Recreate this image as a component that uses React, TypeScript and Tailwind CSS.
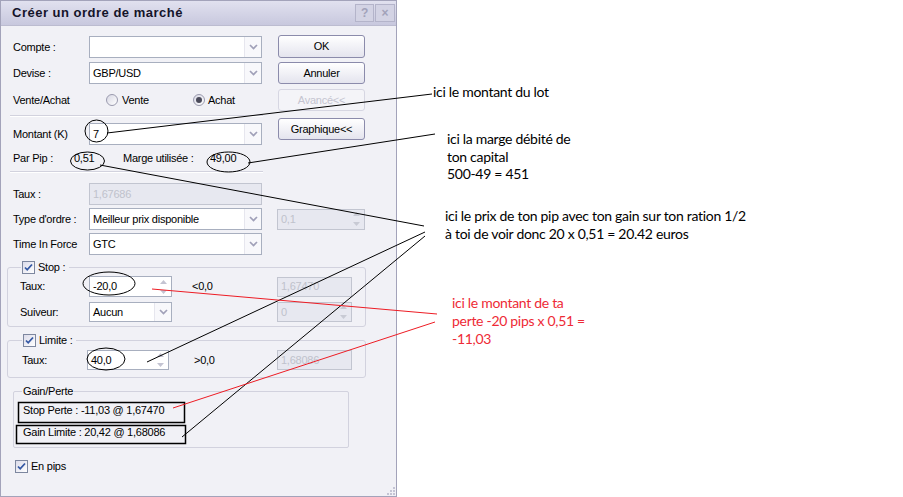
import React from "react";

const ui = "font-['Liberation_Sans',Arial,sans-serif] text-[11px] tracking-[-0.25px] text-black";
const note = "font-['Lato',sans-serif] text-[14px] tracking-[-0.3px]";

function Chevron() {
  return (
    <svg width="9" height="6" viewBox="0 0 9 6">
      <path d="M1 1l3.5 3.5L8 1" fill="none" stroke="#a0a0b8" strokeWidth="1.7" />
    </svg>
  );
}

function Arrows({ color }: { color: string }) {
  return (
    <span className="w-[15px] flex flex-col items-center justify-center gap-[6px]">
      <svg width="7" height="4" viewBox="0 0 7 4">
        <path d="M0 4L3.5 0L7 4z" fill={color} />
      </svg>
      <svg width="7" height="4" viewBox="0 0 7 4">
        <path d="M0 0L3.5 4L7 0z" fill={color} />
      </svg>
    </span>
  );
}

function Combo({ value, className }: { value: string; className: string }) {
  return (
    <div className={`${className} flex border border-[#a8afbf] bg-white`}>
      <span className="flex-1 pl-[3px] flex items-center">{value}</span>
      <span className="w-[17px] flex items-center justify-center border-l border-[#e6e6ee] bg-[#f8f8fb]">
        <Chevron />
      </span>
    </div>
  );
}

function Spin({ value, className, disabled }: { value: string; className: string; disabled?: boolean }) {
  return (
    <div
      className={`${className} flex border ${
        disabled ? "border-[#c2c5d0] bg-[#e7e8f0] text-[#bfc2cc]" : "border-[#a8afbf] bg-white"
      }`}
    >
      <span className="flex-1 pl-[3px] flex items-center">{value}</span>
      <Arrows color={disabled ? "#c8cad4" : "#c4c4d2"} />
    </div>
  );
}

function Field({ value, className }: { value: string; className: string }) {
  return (
    <div className={`${className} flex items-center pl-[3px] border border-[#c2c5d0] bg-[#e7e8f0] text-[#bfc2cc]`}>
      {value}
    </div>
  );
}

function Btn({ children, className, off }: { children: React.ReactNode; className: string; off?: boolean }) {
  return (
    <div
      className={`${className} flex items-center justify-center rounded-[3px] border ${
        off
          ? "border-[#d6d6e2] bg-[#f4f4f8] text-[#c4c4d0]"
          : "border-[#8b8bab] bg-gradient-to-b from-white to-[#e4e4ee]"
      }`}
    >
      {children}
    </div>
  );
}

function Check() {
  return (
    <span className="w-[13px] h-[13px] border border-[#7d879f] bg-gradient-to-br from-[#dcdcea] to-white flex items-center justify-center">
      <svg width="9" height="9" viewBox="0 0 9 9">
        <path d="M1 4.5l2.2 2.3L8 1.5" fill="none" stroke="#3458a4" strokeWidth="1.8" />
      </svg>
    </span>
  );
}

function Radio({ on }: { on?: boolean }) {
  return (
    <span className="w-[12px] h-[12px] rounded-full border border-[#9a9aae] bg-gradient-to-br from-[#d8d8e4] to-white flex items-center justify-center">
      {on && <span className="w-[6px] h-[6px] rounded-full bg-[#4a4a5a]" />}
    </span>
  );
}

function Dialog() {
  return (
    <div className={`${ui} w-[397px] h-[497px] shrink-0 flex flex-col border border-[#a3a3ba] bg-[#f1f1f6]`}>
      {/* title bar */}
      <div className="h-[25px] shrink-0 flex items-center pl-[11px] pr-[1px] border-b border-[#bcbcd0] bg-gradient-to-b from-[#e1e1ef] to-[#c8c8de]">
        <span className="font-bold text-[13px] tracking-[0.5px] text-[#14142a]">Créer un ordre de marché</span>
        <span className="ml-auto flex gap-[1px]">
          <span className="w-[19px] h-[18px] flex items-center justify-center border border-[#b4b4ca] bg-[#d3d3e4] text-[#a2a2ba] font-bold text-[12px]">?</span>
          <span className="w-[20px] h-[18px] flex items-center justify-center border border-[#b4b4ca] bg-[#d3d3e4] text-[#a2a2ba] font-bold text-[12px]">×</span>
        </span>
      </div>

      <div className="flex flex-col pt-[9px]">
        {/* upper block: fields + buttons */}
        <div className="flex">
          <div className="flex flex-col pl-[12px] mt-[1px] w-[261px]">
            <div className="h-[22px] flex items-center">
              <span className="w-[76px]">Compte :</span>
              <Combo value="" className="w-[173px] h-[22px]" />
            </div>
            <div className="h-[22px] flex items-center mt-[4px]">
              <span className="w-[76px]">Devise :</span>
              <Combo value="GBP/USD" className="w-[173px] h-[22px]" />
            </div>
            <div className="h-[22px] flex items-center mt-[5px]">
              <span className="w-[93px]">Vente/Achat</span>
              <span className="w-[87px] flex items-center gap-[4px]">
                <Radio />
                Vente
              </span>
              <span className="flex items-center gap-[3px]">
                <Radio on />
                Achat
              </span>
            </div>
            <div className="mt-[4px] -ml-[3px] w-[253px] h-[2px] border-t border-[#d2d2de] border-b border-b-white" />
            <div className="h-[22px] flex items-center mt-[6px]">
              <span className="w-[76px]">Montant (K)</span>
              <Combo value="7" className="w-[173px] h-[22px]" />
            </div>
          </div>
          <div className="flex flex-col ml-[16px] w-[87px]">
            <Btn className="h-[23px] border-[#7b7bb4]">OK</Btn>
            <Btn className="h-[22px] mt-[4px]">Annuler</Btn>
            <Btn className="h-[22px] mt-[5px]" off>
              Avancé&lt;&lt;
            </Btn>
            <Btn className="h-[22px] mt-[7px]">Graphique&lt;&lt;</Btn>
          </div>
        </div>

        <div className="h-[20px] mt-[3px] pl-[12px] flex items-center">
          <span className="w-[61px]">Par Pip :</span>
          <span className="w-[49px]">0,51</span>
          <span className="w-[87px]">Marge utilisée :</span>
          <span>49,00</span>
        </div>
        <div className="mt-[3px] ml-[9px] w-[253px] h-[2px] border-t border-[#d2d2de] border-b border-b-white" />

        <div className="h-[22px] mt-[10px] pl-[12px] flex items-center">
          <span className="w-[76px]">Taux :</span>
          <Field value="1,67686" className="w-[173px] h-[22px]" />
        </div>
        <div className="h-[22px] mt-[3px] pl-[12px] flex items-center">
          <span className="w-[76px]">Type d'ordre :</span>
          <Combo value="Meilleur prix disponible" className="w-[173px] h-[22px]" />
          <Spin value="0,1" className="ml-[15px] w-[88px] h-[21px]" disabled />
        </div>
        <div className="h-[22px] mt-[3px] pl-[12px] flex items-center">
          <span className="w-[76px]">Time In Force</span>
          <Combo value="GTC" className="w-[173px] h-[22px]" />
        </div>

        {/* Stop */}
        <div className="mt-[12px] ml-[6px] w-[359px] flex flex-col border border-[#d2d2de] rounded-[3px] pb-[4px]">
          <div className="-mt-[7px] ml-[13px] h-[13px] w-fit flex items-center gap-[3px] px-[1px] pr-[4px] bg-[#f1f1f6]">
            <Check />
            Stop :
          </div>
          <div className="h-[21px] mt-[2px] pl-[12px] flex items-center">
            <span className="w-[69px]">Taux:</span>
            <Spin value="-20,0" className="w-[83px] h-[21px]" />
            <span className="ml-[20px] w-[85px]">&lt;0,0</span>
            <Field value="1,67470" className="w-[75px] h-[20px]" />
          </div>
          <div className="h-[20px] mt-[5px] pl-[12px] flex items-center">
            <span className="w-[69px]">Suiveur:</span>
            <Combo value="Aucun" className="w-[83px] h-[20px]" />
            <Spin value="0" className="ml-[105px] w-[75px] h-[20px]" disabled />
          </div>
        </div>

        {/* Limite */}
        <div className="mt-[13px] ml-[6px] w-[359px] flex flex-col border border-[#d2d2de] rounded-[3px] pb-[7px]">
          <div className="-mt-[7px] ml-[14px] h-[13px] w-fit flex items-center gap-[3px] px-[1px] pr-[4px] bg-[#f1f1f6]">
            <Check />
            Limite :
          </div>
          <div className="h-[20px] mt-[3px] pl-[14px] flex items-center">
            <span className="w-[65px]">Taux:</span>
            <Spin value="40,0" className="w-[82px] h-[20px]" />
            <span className="ml-[25px] w-[83px]">&gt;0,0</span>
            <Field value="1,68086" className="w-[75px] h-[20px]" />
          </div>
        </div>

        {/* Gain/Perte */}
        <div className="mt-[13px] ml-[12px] w-[336px] flex flex-col border border-[#d2d2de] rounded-[2px] pb-[7px]">
          <div className="-mt-[7px] ml-[8px] h-[13px] w-fit flex items-center px-[1px] bg-[#f1f1f6]">Gain/Perte</div>
          <div className="h-[16px] mt-[4px] pl-[9px] flex items-center">Stop Perte : -11,03 @ 1,67470</div>
          <div className="h-[16px] mt-[6px] pl-[9px] flex items-center">Gain Limite : 20,42 @ 1,68086</div>
        </div>

        <div className="mt-[10px] ml-[14px] flex items-center gap-[3px]">
          <Check />
          En pips
        </div>
      </div>

      {/* resize grip */}
      <div className="mt-auto self-end mr-[1px] mb-[1px]">
        <svg width="8" height="8" viewBox="0 0 8 8">
          {[
            [6, 0],
            [6, 3],
            [3, 3],
            [6, 6],
            [3, 6],
            [0, 6],
          ].map(([x, y]) => (
            <rect key={`${x}-${y}`} x={x} y={y} width="2" height="2" fill="#c4c4d4" />
          ))}
        </svg>
      </div>
    </div>
  );
}

function Notes() {
  return (
    <div className={`${note} flex flex-col text-black leading-[18px]`}>
      <p className="mt-[83px] ml-[36px]">ici le montant du lot</p>
      <p className="mt-[29px] ml-[50px] leading-[17.5px]">
        ici la marge débité de
        <br />
        ton capital
        <br />
        500-49 = 451
      </p>
      <p className="mt-[24px] ml-[48px]">
        ici le prix de ton pip avec ton gain sur ton ration 1/2
        <br />à toi de voir donc 20 x 0,51 = 20.42 euros
      </p>
      <p className="mt-[51px] ml-[55px] text-[#ee2a36]">
        ici le montant de ta
        <br />
        perte -20 pips x 0,51 =
        <br />
        -11,03
      </p>
    </div>
  );
}

// marker circles, boxes and leader lines drawn over the dialog
function Markup() {
  const black: [number, number, number, number][] = [
    [107, 133, 432, 94],
    [248, 163, 435, 134],
    [100, 165, 424, 226],
    [147, 362, 425, 232],
    [182, 437, 425, 236],
  ];
  const red: [number, number, number, number][] = [
    [152, 289, 437, 314],
    [173, 408, 435, 322],
  ];
  return (
    <svg className="absolute inset-0 pointer-events-none" width="903" height="497" viewBox="0 0 903 497">
      <g fill="none" stroke="#000" strokeWidth="1">
        <ellipse cx="96.5" cy="131" rx="11.5" ry="11" />
        <ellipse cx="87.5" cy="161" rx="17" ry="9" />
        <ellipse cx="228.5" cy="162" rx="21.5" ry="10" />
        <ellipse cx="109" cy="283.5" rx="26" ry="11.5" />
        <ellipse cx="106" cy="359" rx="19" ry="11" />
        <rect x="18.5" y="402.5" width="166" height="20" strokeWidth="1.5" />
        <rect x="16.5" y="425.5" width="169" height="18" strokeWidth="1.5" />
        {black.map(([x1, y1, x2, y2]) => (
          <line key={`${x1}-${y1}`} x1={x1} y1={y1} x2={x2} y2={y2} />
        ))}
      </g>
      <g stroke="#ed1c24" strokeWidth="1">
        {red.map(([x1, y1, x2, y2]) => (
          <line key={`${x1}-${y1}`} x1={x1} y1={y1} x2={x2} y2={y2} />
        ))}
      </g>
    </svg>
  );
}

export default function App() {
  return (
    <div className="relative w-[903px] h-[497px] flex bg-white overflow-hidden">
      <Dialog />
      <Notes />
      <Markup />
    </div>
  );
}
